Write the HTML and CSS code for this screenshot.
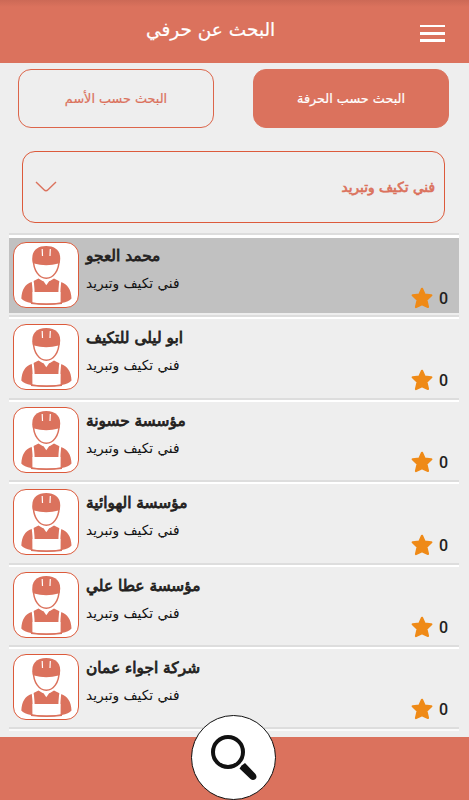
FILE: index.html
```html
<!DOCTYPE html>
<html lang="ar">
<head>
    <meta charset="UTF-8">
    <meta name="viewport" content="width=device-width, initial-scale=1.0">
    <title>البحث عن حرفي</title>
    <link rel="stylesheet" href="styles.css">
</head>

<body>
    <!-- Shared icons -->
    <svg class="icon-defs" width="0" height="0">
        <symbol id="worker" viewBox="1 1 64 64">
            <path class="worker-line" d="M20.300 17C20.300 29 26.500 36.300 33.300 36.300S46.200 29 46.200 17" />
            <path d="M21 21.500L19.700 20.500C17.500 9 24 4 33.200 4S49 9 46.800 20.500L45.500 21.500Q39.500 23.300 33.200 23.300T21 21.500Z" />
            <path d="M8.300 56.500C9 47 12 42.500 18.500 40L25.500 36.500Q29 39.500 33.300 39.500T41 36.500L48 40C54.500 42.500 58 47 58.500 56.500C52 64.500 15 64.500 8.300 56.500Z" />
            <path class="worker-white" d="M19.500 50H47.500V60.500Q33.500 62.500 19.500 60.500Z" />
            <path class="worker-strap" d="M19.500 38.500Q20.800 45 20.800 60M47.500 38.500Q46.200 45 46.200 60" />
            <path class="worker-white" d="M30 38.500L33.300 43.200L36.600 38.500Z" />
            <path class="worker-cut" d="M29.200 7L29.500 14M37.300 7L37 14" />
            <path class="worker-line" d="M18 61.300Q33.500 63 49 61.300" />
        </symbol>
        <symbol id="star" viewBox="0 0 22 22">
            <path d="M11 1.800L13.700 7.700L20.300 8.300L15.400 13L17 20L11 17.300L5 20L6.600 13L1.700 8.300L8.300 7.700Z" />
        </symbol>
    </svg>

    <div class="app">
        <header class="header">
            <h1>البحث عن حرفي</h1>
            <button class="menu-button" aria-label="القائمة">
                <span></span>
                <span></span>
                <span></span>
            </button>
        </header>

        <div class="tabs">
            <button class="tab tab-name">البحث حسب الأسم</button>
            <button class="tab tab-craft active">البحث حسب الحرفة</button>
        </div>

        <div class="select">
            <svg class="chevron" width="22" height="12" viewBox="0 0 22 12">
                <path d="M1 1L9 8.800Q11 10.700 13 8.800L21 1" />
            </svg>
            <span dir="rtl">فني تكيف وتبريد</span>
        </div>

        <ul class="list">
            <li class="selected">
                <div class="row">
                    <svg class="avatar"><use href="#worker" /></svg>
                    <div class="info">
                        <h2><bdi>محمد العجو</bdi></h2>
                        <p><bdi>فني تكيف وتبريد</bdi></p>
                    </div>
                    <div class="rating"><svg><use href="#star" /></svg><span>0</span></div>
                </div>
            </li>
            <li>
                <div class="row">
                    <svg class="avatar"><use href="#worker" /></svg>
                    <div class="info">
                        <h2><bdi>ابو ليلى للتكيف</bdi></h2>
                        <p><bdi>فني تكيف وتبريد</bdi></p>
                    </div>
                    <div class="rating"><svg><use href="#star" /></svg><span>0</span></div>
                </div>
            </li>
            <li>
                <div class="row">
                    <svg class="avatar"><use href="#worker" /></svg>
                    <div class="info">
                        <h2><bdi>مؤسسة حسونة</bdi></h2>
                        <p><bdi>فني تكيف وتبريد</bdi></p>
                    </div>
                    <div class="rating"><svg><use href="#star" /></svg><span>0</span></div>
                </div>
            </li>
            <li>
                <div class="row">
                    <svg class="avatar"><use href="#worker" /></svg>
                    <div class="info">
                        <h2><bdi>مؤسسة الهوائية</bdi></h2>
                        <p><bdi>فني تكيف وتبريد</bdi></p>
                    </div>
                    <div class="rating"><svg><use href="#star" /></svg><span>0</span></div>
                </div>
            </li>
            <li>
                <div class="row">
                    <svg class="avatar"><use href="#worker" /></svg>
                    <div class="info">
                        <h2><bdi>مؤسسة عطا علي</bdi></h2>
                        <p><bdi>فني تكيف وتبريد</bdi></p>
                    </div>
                    <div class="rating"><svg><use href="#star" /></svg><span>0</span></div>
                </div>
            </li>
            <li>
                <div class="row">
                    <svg class="avatar"><use href="#worker" /></svg>
                    <div class="info">
                        <h2><bdi>شركة اجواء عمان</bdi></h2>
                        <p><bdi>فني تكيف وتبريد</bdi></p>
                    </div>
                    <div class="rating"><svg><use href="#star" /></svg><span>0</span></div>
                </div>
            </li>
        </ul>

        <footer class="footer">
            <button class="search-button" aria-label="بحث">
                <svg width="48" height="48" viewBox="0 0 48 48">
                    <circle cx="17" cy="17" r="15" />
                    <path d="M30 31L34 28L44.500 39Q46.500 42 44.500 44Q42 46 39.500 44L28.500 33.500L31 30Z" />
                </svg>
            </button>
        </footer>
    </div>
</body>

</html>
```

FILE: styles.css
```css
/* General styles */
* {
    box-sizing: border-box;
}

body {
    font-family: "DejaVu Sans", sans-serif;
    margin: 0;
    background-color: #eeeeee;
    color: #231f20;
}

button {
    font-family: inherit;
    cursor: pointer;
}

.icon-defs {
    display: block;
}

.app {
    height: 800px;
    display: flex;
    flex-direction: column;
    overflow: hidden;
}

/* Header */
.header {
    height: 62.5px;
    flex: none;
    display: flex;
    align-items: center;
    justify-content: space-between;
    padding: 4px 24px 0 146px;
    background: linear-gradient(#cc6956, #db725d 7px);
}

.header h1 {
    margin: 0;
    padding-bottom: 8px;
    font-size: 18.5px;
    font-weight: normal;
    color: #fff;
    white-space: nowrap;
    -webkit-text-stroke: 0.2px;
}

.menu-button {
    display: flex;
    flex-direction: column;
    gap: 4.5px;
    width: 25px;
    padding: 0;
    border: none;
    background: none;
}

.menu-button span {
    height: 2.7px;
    background-color: #fff;
}

/* Tabs */
.tabs {
    flex: none;
    display: flex;
    justify-content: space-between;
    padding: 6.5px 20px 0 18px;
}

.tab {
    width: 196px;
    height: 59px;
    padding: 0 0 1px;
    border: 1px solid #dc654a;
    border-radius: 13px;
    background: none;
    color: #db725d;
    font-size: 12.8px;
    -webkit-text-stroke: 0.2px;
}

.tab.active {
    border-color: #db725d;
    background-color: #db725d;
    color: #fff;
}

/* Craft select */
.select {
    flex: none;
    display: flex;
    align-items: center;
    justify-content: space-between;
    height: 72px;
    margin: 23px 24px 0 22px;
    padding: 0 9px 0 12px;
    border: 1px solid #dc5a3b;
    border-radius: 13px;
    color: #db725d;
    font-size: 13.7px;
    -webkit-text-stroke: 0.7px;
}

.chevron path {
    fill: none;
    stroke: #db725d;
    stroke-width: 1.4;
}

/* Results */
.list {
    flex: none;
    height: 504px;
    margin: 10px 10px 0 9px;
    padding: 0;
    list-style: none;
}

.list li {
    height: 82.4px;
    border-top: 2px solid #dddddd;
}

.list li:last-child {
    box-shadow: 0 2px #dddddd, 0 4px #fafafa;
}

.row {
    display: flex;
    height: 77.5px;
    padding: 5px 11px 0 4px;
    border-top: 2px solid #fff;
}

.selected .row {
    padding-top: 4px;
    border-top-width: 3px;
    background-color: #c1c1c1;
}

.avatar {
    flex: none;
    width: 66px;
    height: 66px;
    border: 1px solid #dc5a3b;
    border-radius: 13px;
    background-color: #fff;
    fill: #db725d;
}

.worker-line {
    fill: none;
    stroke: #db725d;
    stroke-width: 1.5;
}

.worker-white {
    fill: #fff;
}

.worker-cut {
    fill: none;
    stroke: #fff;
    stroke-width: 1.2;
}

.worker-strap {
    fill: none;
    stroke: #fff;
    stroke-width: 2;
}

.info {
    flex: 1;
    padding-left: 7px;
}

.info h2 {
    margin: 4px 0 0;
    font-size: 15.4px;
    font-weight: normal;
    line-height: 20px;
    -webkit-text-stroke: 0.8px;
}

.info p {
    margin: 7px 0 0;
    font-size: 13.7px;
    line-height: 20px;
    color: #111;
}

.rating {
    display: flex;
    align-items: flex-end;
    gap: 6px;
    padding-bottom: 4px;
    font-family: Roboto, sans-serif;
    font-size: 16px;
    font-weight: 500;
    line-height: 20px;
}

.rating svg {
    width: 22px;
    height: 22px;
    fill: #ef8a17;
    stroke: #ef8a17;
    stroke-width: 2.2;
    stroke-linejoin: round;
}

/* Bottom bar */
.footer {
    flex: none;
    height: 63px;
    background-color: #db725d;
}

.search-button {
    display: flex;
    width: 85px;
    height: 85px;
    margin: -22px 0 0 191px;
    padding: 19px 0 0 19px;
    border: 1px solid #111;
    border-radius: 50%;
    background-color: #fff;
    position: relative;
}

.search-button circle {
    fill: none;
    stroke: #111;
    stroke-width: 4;
}

.search-button path {
    fill: #111;
}
```
